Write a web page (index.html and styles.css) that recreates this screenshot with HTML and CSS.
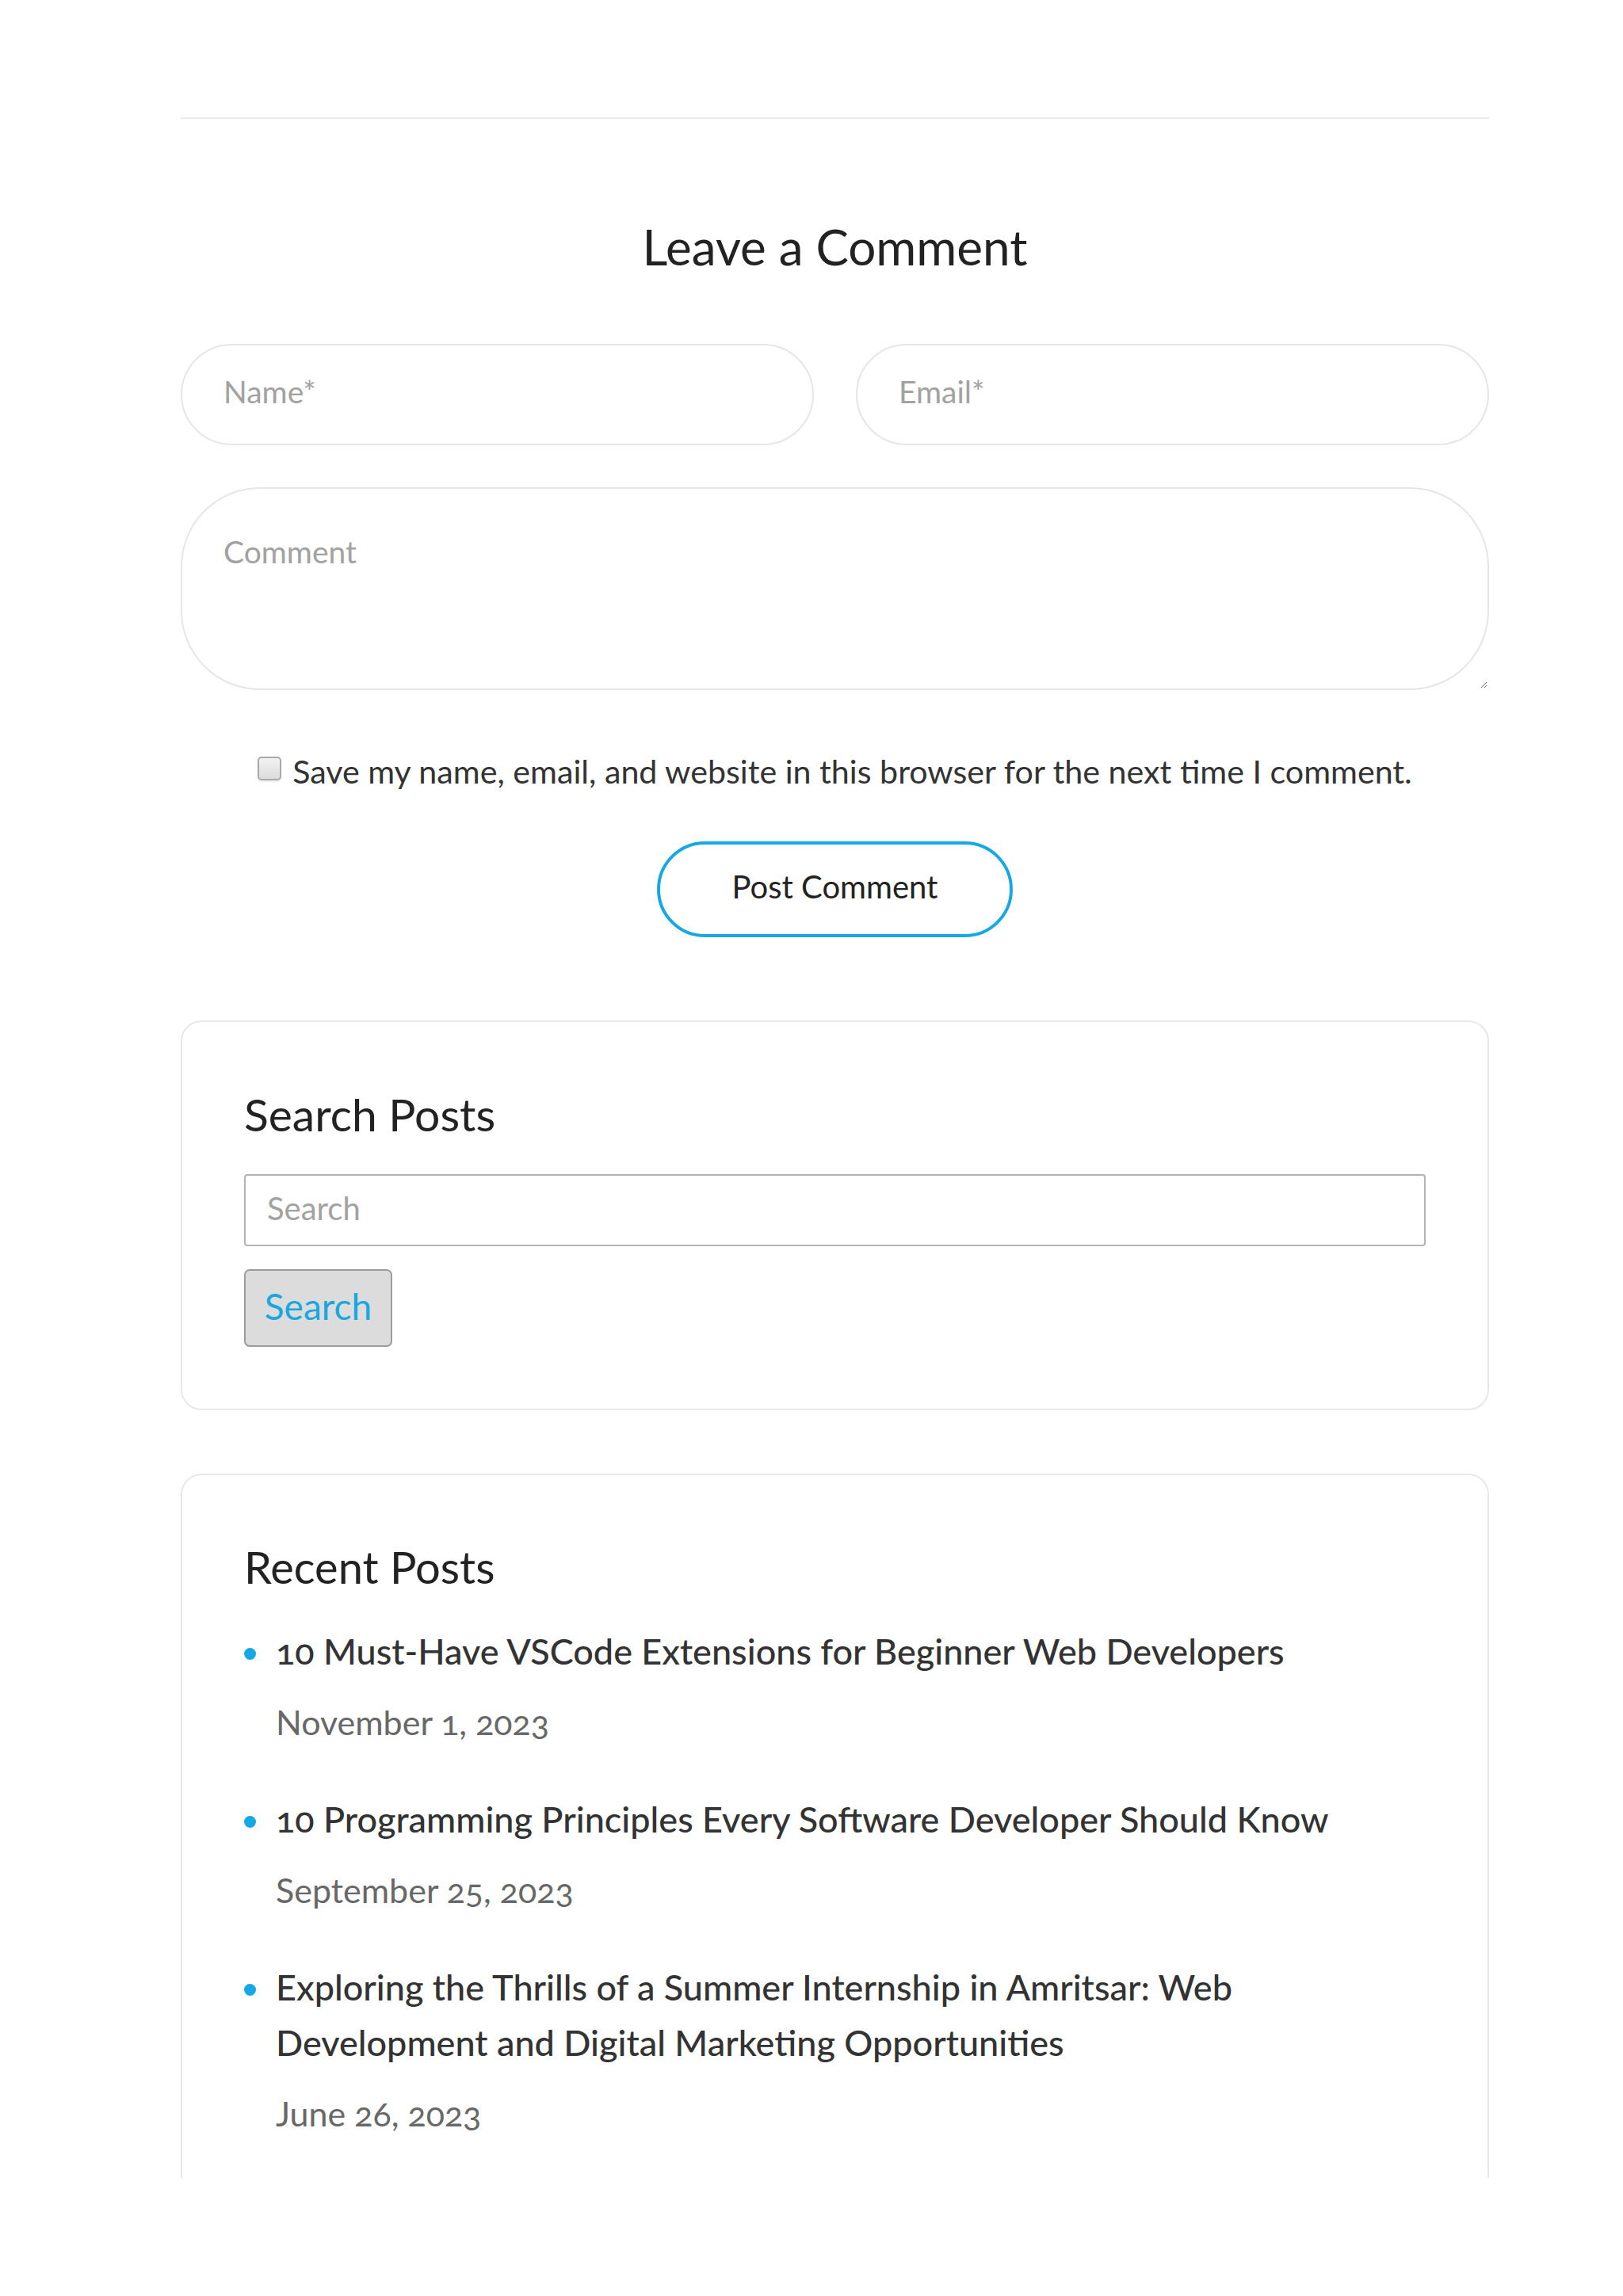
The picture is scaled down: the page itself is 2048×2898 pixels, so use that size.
FILE: index.html
```html
<!DOCTYPE html>
<html lang="en">
<head>
    <meta charset="UTF-8">
    <meta name="viewport" content="width=device-width, initial-scale=1.0">
    <title>Leave a Comment</title>
    <link rel="stylesheet" href="styles.css">
</head>
<body>
    <div class="page">
        <section class="comments">
            <h3 class="comment-title">Leave a Comment</h3>
            <form class="comment-form" onsubmit="return false">
                <div class="field-row">
                    <input class="field" type="text" placeholder="Name*">
                    <input class="field" type="email" placeholder="Email*">
                </div>
                <textarea class="field comment-box" placeholder="Comment"></textarea>
                <label class="consent">
                    <input class="consent-box" type="checkbox">
                    <span>Save my name, email, and website in this browser for the next time I comment.</span>
                </label>
                <div class="submit-row">
                    <button class="post-btn" type="submit">Post Comment</button>
                </div>
            </form>
        </section>

        <aside class="widget">
            <h2 class="widget-title">Search Posts</h2>
            <form class="search-form" onsubmit="return false">
                <input class="search-field" type="search" placeholder="Search">
                <button class="search-btn" type="submit">Search</button>
            </form>
        </aside>

        <aside class="widget widget-open">
            <h2 class="widget-title">Recent Posts</h2>
            <ul class="recent">
                <li>
                    <a href="#">10 Must-Have VSCode Extensions for Beginner Web Developers</a>
                    <span class="post-date">November 1, 2023</span>
                </li>
                <li>
                    <a href="#">10 Programming Principles Every Software Developer Should Know</a>
                    <span class="post-date">September 25, 2023</span>
                </li>
                <li>
                    <a href="#">Exploring the Thrills of a Summer Internship in Amritsar: Web Development and Digital Marketing Opportunities</a>
                    <span class="post-date">June 26, 2023</span>
                </li>
            </ul>
        </aside>
    </div>
</body>
</html>
```

FILE: styles.css
```css
* {
    box-sizing: border-box;
}
body {
    margin: 0;
    background-color: #fff;
    font-family: Lato, "Noto Sans", sans-serif;
    font-variant-numeric: oldstyle-nums;
    color: #333;
}
.page {
    width: 1651px;
    margin-left: 228px;
    padding-top: 148px;
    padding-bottom: 140px;
}

/* Comment form */
.comments {
    border-top: 2px solid #ebebeb;
}
.comment-title {
    margin: 125px 0 0;
    font-size: 62px;
    font-weight: 400;
    line-height: 72px;
    text-align: center;
    color: #222;
}
.comment-form {
    display: flex;
    flex-direction: column;
    margin-top: 87px;
}
.field-row {
    display: grid;
    grid-template-columns: 1fr 1fr;
    gap: 53px;
}
.field {
    height: 128px;
    padding: 0 52px 8px;
    border: 2px solid #e6e6e6;
    border-radius: 64px;
    font-family: inherit;
    font-size: 39px;
    color: #333;
    background: #fff;
    outline: none;
}
.field::placeholder,
.search-field::placeholder {
    color: #a2a2a2;
}
.comment-box {
    height: 256px;
    margin-top: 53px;
    padding: 56px 52px 42px;
    border-radius: 100px;
    line-height: normal;
}
.consent {
    display: flex;
    align-items: center;
    justify-content: center;
    gap: 14px;
    margin-top: 77px;
    font-size: 41.2px;
    color: #333;
}
.consent-box {
    appearance: none;
    width: 30px;
    height: 30px;
    margin: 0;
    border: 2px solid #a9a9a9;
    border-radius: 5px;
    background: linear-gradient(#f2f2f2, #dcdcdc);
    box-shadow: 0 2px 2px rgba(0, 0, 0, 0.08);
    position: relative;
    top: -3px;
}
.submit-row {
    display: flex;
    justify-content: center;
    margin-top: 64px;
}
.post-btn {
    width: 449px;
    height: 121px;
    border: 4px solid #17a8e3;
    border-radius: 61px;
    background: #fff;
    font-family: inherit;
    font-size: 40px;
    color: #222;
    padding-bottom: 8px;
}

/* Sidebar widgets */
.widget {
    margin-top: 105px;
    padding: 82px 78px 78px;
    border: 2px solid #e8e8e8;
    border-radius: 26px;
}
.widget + .widget {
    margin-top: 80px;
}
.widget-open {
    padding-top: 82px;
    padding-bottom: 46px;
    border-bottom: none;
    border-radius: 26px 26px 0 0;
}
.widget-title {
    margin: 0;
    font-size: 57px;
    font-weight: 400;
    line-height: normal;
    color: #222;
}
.widget-open .widget-title {
    font-size: 56px;
}
.search-form {
    display: flex;
    flex-direction: column;
    align-items: flex-start;
    gap: 29px;
    margin-top: 42px;
}
.search-field {
    width: 100%;
    height: 91px;
    padding: 0 27px 6px;
    border: 2px solid #b4b4b4;
    border-radius: 4px;
    font-family: inherit;
    font-size: 40px;
    color: #333;
    outline: none;
}
.search-btn {
    width: 187px;
    height: 98px;
    padding: 0 0 6px;
    border: 2px solid #9c9c9c;
    border-radius: 7px;
    background: #dcdcdc;
    font-family: inherit;
    font-size: 46px;
    color: #19a7e1;
}

/* Recent posts */
.recent {
    list-style: none;
    margin: 38px 0 0;
    padding: 0;
    display: flex;
    flex-direction: column;
    gap: 52px;
}
.recent li {
    display: grid;
    grid-template-columns: 40px 1fr;
    row-gap: 20px;
}
.recent li::before {
    content: "";
    grid-row: 1;
    width: 15px;
    height: 15px;
    margin-top: 31px;
    border-radius: 50%;
    background: #14a8e6;
}
.recent a {
    grid-column: 2;
    font-size: 45px;
    font-weight: 500;
    line-height: 70px;
    color: #333;
    text-decoration: none;
}
.post-date {
    grid-column: 2;
    font-size: 43px;
    line-height: 70px;
    color: #686868;
}
```
